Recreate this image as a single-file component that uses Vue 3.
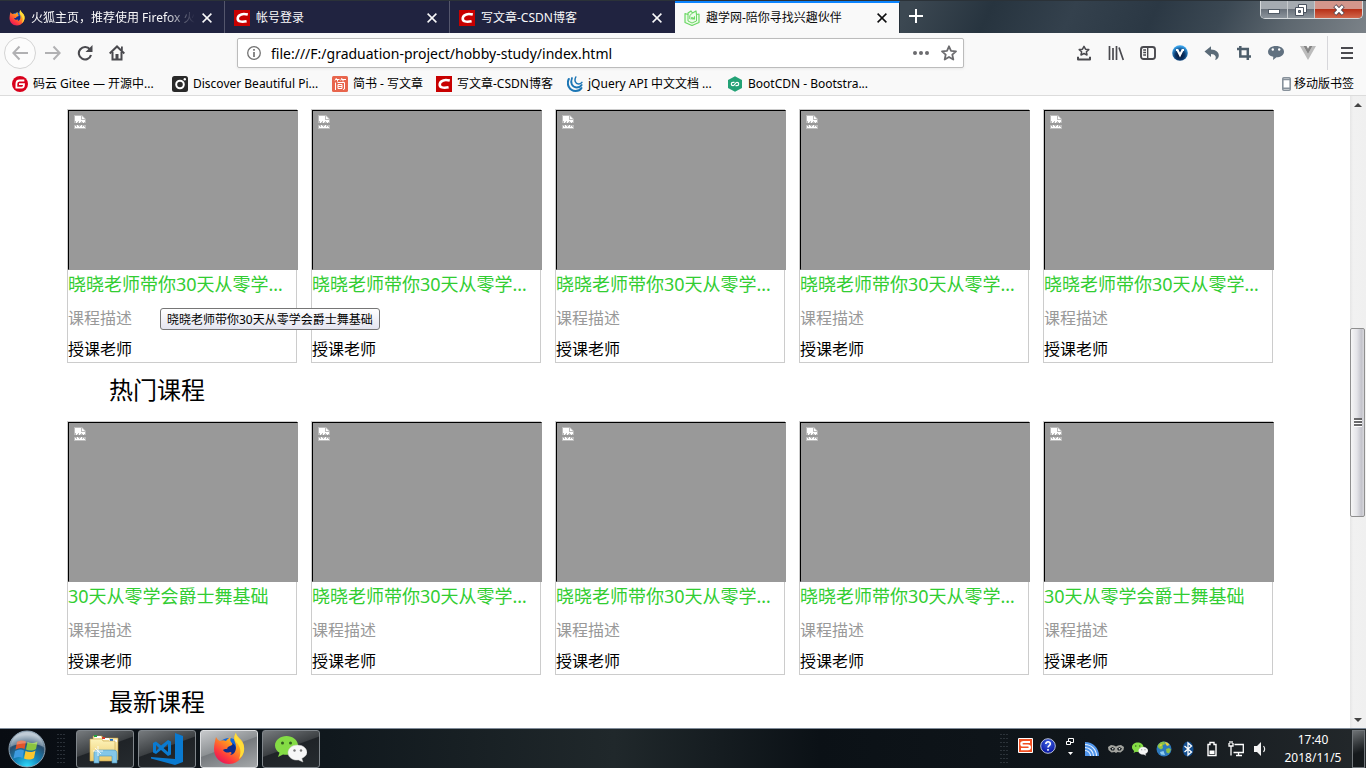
<script setup>
import { ref } from 'vue'

const address = ref('file:///F:/graduation-project/hobby-study/index.html')

const tabs = [
  { title: '火狐主页，推荐使用 Firefox 火狐浏览器', icon: 'firefox' },
  { title: '帐号登录', icon: 'csdn' },
  { title: '写文章-CSDN博客', icon: 'csdn' },
  { title: '趣学网-陪你寻找兴趣伙伴', icon: 'book', active: true },
]

const bookmarks = [
  { title: '码云 Gitee — 开源中...', icon: 'gitee', size: 'wide' },
  { title: 'Discover Beautiful Pi...', icon: 'camera', size: 'wide' },
  { title: '简书 - 写文章', icon: 'jianshu', size: 'short' },
  { title: '写文章-CSDN博客', icon: 'csdn', size: 'medium' },
  { title: 'jQuery API 中文文档 ...', icon: 'jquery', size: 'wide' },
  { title: 'BootCDN - Bootstra...', icon: 'bootcdn', size: 'wide' },
]

const tools = [
  { name: '书签', icon: 'bookmark-tray' },
  { name: '我的足迹', icon: 'library' },
  { name: '侧栏', icon: 'sidebar' },
  { name: 'V 扩展', icon: 'v-ball' },
  { name: '撤销', icon: 'undo' },
  { name: '截图', icon: 'crop' },
  { name: '聊天', icon: 'chat' },
  { name: 'Vue', icon: 'vue' },
]

const full = '晓晓老师带你30天从零学会爵士舞基础'
const brief = '30天从零学会爵士舞基础'
const sections = [
  { heading: '热门课程', courses: [full, full, full, full, full] },
  { heading: '最新课程', courses: [brief, full, full, full, brief] },
]

const apps = [
  { name: '资源管理器', icon: 'explorer' },
  { name: 'Visual Studio Code', icon: 'vscode' },
  { name: 'Firefox', icon: 'firefox', active: true },
  { name: '微信', icon: 'wechat' },
]

const tray = ['wifi', 'eyes', 'wechat', 'globe', 'bluetooth', 'battery', 'network', 'volume']
</script>

<template>
  <div class="desktop">
    <svg class="sprite" width="0" height="0" aria-hidden="true">
      <defs>
        <linearGradient id="g-fox" x1="0.9" y1="0" x2="0.2" y2="1">
          <stop offset="0" stop-color="#fff044" /><stop offset="0.4" stop-color="#ff9a1f" />
          <stop offset="0.75" stop-color="#ff3a3d" /><stop offset="1" stop-color="#e2105f" />
        </linearGradient>
        <radialGradient id="g-orb" cx="0.5" cy="1" r="0.9">
          <stop offset="0" stop-color="#2fe0ff" /><stop offset="0.4" stop-color="#1583b8" />
          <stop offset="0.75" stop-color="#284e6e" /><stop offset="1" stop-color="#a7b8c6" />
        </radialGradient>
        <radialGradient id="g-ball" cx="0.5" cy="0.65" r="0.6">
          <stop offset="0" stop-color="#05102e" /><stop offset="0.5" stop-color="#0a3568" />
          <stop offset="1" stop-color="#3aa5ee" />
        </radialGradient>
        <linearGradient id="g-folder" x1="0" y1="0" x2="0" y2="1">
          <stop offset="0" stop-color="#fdf3ba" /><stop offset="1" stop-color="#eccb6c" />
        </linearGradient>
        <radialGradient id="g-help" cx="0.5" cy="0.3" r="0.7">
          <stop offset="0" stop-color="#3f63e0" /><stop offset="1" stop-color="#0410a0" />
        </radialGradient>
      </defs>
      <symbol id="i-firefox" viewBox="0 0 32 32">
        <circle cx="16" cy="17" r="12" fill="#1168dd" />
        <path fill="#0c2c8c" d="M12 10c5-3 12 1 11 8-1 4-4 6-8 6s-7-3-7-7z" />
        <path fill="url(#g-fox)" d="M3 4c1 2 2 3 4 4 2-1 4-1 6 0 1-2 3-3 5-4-1 2-1 4 0 5 1 1 2 2 1 3-1 1-3 1-4 2-1 1 0 2-2 2-1 0-2 0-3 1 2 3 5 3 7 2 2 0 2 2 0 3 4 0 6-4 6-8 0-4-2-6-2-8 0-3 1-5 2-6 0 4 7 6 8 13C32 22 26 31 16 31 7 31 1 24 1 16 1 12 2 8 3 4z" />
        <path fill="#ffdd39" d="M23 0c0 5 7 7 8 14 1 5-2 10-5 12 3-8 1-13-3-17-2-3-2-6 0-9z" />
      </symbol>
      <symbol id="i-csdn" viewBox="0 0 16 16">
        <path fill="#c80000" d="M0 0h16v16H0z" />
        <path fill="none" stroke="#fff" stroke-width="2.6" d="M13.8 4.600C9 3.400 4.600 4.200 3.800 7.700c-.8 4 3.600 4.600 8.800 3.600" />
      </symbol>
      <symbol id="i-book" viewBox="0 0 16 16">
        <path fill="#ecfbe8" stroke="#6bd765" stroke-width="1.200" stroke-linejoin="round" d="M1 3.500 4 4.500V3l3-2 1.500 2L12 1l.5 3.500L15 4v8.500l-7 3-7-3z" />
        <path fill="none" stroke="#6bd765" d="M4 4.500V11l4 2 4.500-2V4.500M8.500 3 5.800 5.500V9M7 9.500l1-2.500 1 2.500 1.500-3v3" />
      </symbol>
      <symbol id="i-gitee" viewBox="0 0 16 16">
        <circle cx="8" cy="8" r="8" fill="#d9001b" />
        <path fill="none" stroke="#fff" stroke-width="1.800" d="M12.300 4.500H7.500C5 4.500 4.400 5.800 4.400 8v3.600h5.400c1.500 0 2.200-.8 2.200-3.400H7" />
      </symbol>
      <symbol id="i-camera" viewBox="0 0 16 16">
        <rect width="16" height="16" rx="2.500" fill="#292929" />
        <circle cx="8" cy="8.500" r="3.800" fill="none" stroke="#fff" stroke-width="2" />
        <circle cx="12.800" cy="3.300" r="1.200" fill="#fff" />
      </symbol>
      <symbol id="i-jianshu" viewBox="0 0 16 16">
        <rect width="16" height="16" rx="1.500" fill="#e8654d" />
        <path fill="none" stroke="#fff" d="M4.500 2 3 4.500M4 3.500h3.500M5.500 4v1.500M10 2 8.700 4.500M9.500 3.500H14M11 4v1.500M3.500 6.500V14M5.500 6.500h7V13L11 13.500M6 8.500h4v4H6zM6 10.500h4" />
      </symbol>
      <symbol id="i-jquery" viewBox="0 0 16 16">
        <g fill="none" stroke="#1c76b5" stroke-linecap="round">
          <path stroke-width="2" d="M1.800 3C-.8 8.500 2.500 15 8.500 15c3 0 5-1.200 6-3" />
          <path stroke-width="1.800" d="M5 2C3 6.800 5 11.300 9.500 11.500c2.500 0 4.200-1 5.200-2.500" />
          <path stroke-width="1.500" d="M8.800 1C7 4.500 8.500 8 11.500 8c1.500 0 2.700-.6 3.400-1.600" />
        </g>
      </symbol>
      <symbol id="i-bootcdn" viewBox="0 0 16 16">
        <path fill="#23a276" d="m8 .2 7 3.900v7.800l-7 3.900-7-3.900V4.100z" />
        <path fill="none" stroke="#fff" stroke-width="1.200" d="M7.500 6.300H6a1.700 1.700 0 0 0 0 3.400c1.800 0 2.200-3.400 4-3.400a1.700 1.700 0 0 1 0 3.400H8.500" />
      </symbol>
      <symbol id="i-phone" viewBox="0 0 9 14">
        <rect x=".8" y=".8" width="7.400" height="12.400" rx="1" fill="#fff" stroke="#87919b" stroke-width="1.600" />
        <path stroke="#87919b" stroke-width="1.400" d="M1 2.500h7M1 11.300h7" />
      </symbol>
      <symbol id="i-bookmark-tray" viewBox="0 0 16 16">
        <path fill="none" stroke="#4a4a4f" stroke-width="1.500" stroke-linejoin="round" d="m8 1.300 1.500 2.900 3.300.4-2.400 2.200.6 3.200-3-1.500L5 10l.6-3.200-2.400-2.200 3.300-.4z" />
        <path fill="none" stroke="#4a4a4f" stroke-width="2" stroke-linejoin="round" d="M2 11.800v2.600h12v-2.600" />
      </symbol>
      <symbol id="i-library" viewBox="0 0 16 16">
        <path fill="none" stroke="#4a4a4f" stroke-width="1.700" d="M1.500 1v14M5 3v12M8.500 1v14M11 2.500 15.300 15" />
      </symbol>
      <symbol id="i-sidebar" viewBox="0 0 16 16">
        <rect x="1" y="2" width="14" height="12" rx="2.500" fill="none" stroke="#4a4a4f" stroke-width="1.900" />
        <path stroke="#4a4a4f" stroke-width="1.400" d="M7.700 2v12M3.200 5H6M3.200 7.500H6M3.200 10H6" />
      </symbol>
      <symbol id="i-v-ball" viewBox="0 0 16 16">
        <circle cx="8" cy="8" r="7.800" fill="url(#g-ball)" />
        <path fill="none" stroke="#fff" stroke-width="2.200" d="M4 5h1.500L8 10l2.500-5H12" />
      </symbol>
      <symbol id="i-undo" viewBox="0 0 16 16">
        <path fill="#5b6b78" d="M.5 6.500 7 1.300v3.200c5 0 8.300 3 7.800 6.500-.2 1.800-1.500 3.500-3.800 4 1.800-3 .5-5.800-4-6v3z" />
      </symbol>
      <symbol id="i-crop" viewBox="0 0 16 16">
        <path fill="none" stroke="#4d5e6b" stroke-width="2.500" d="M4.300 1v10.500H15M1 4h10.800v11" />
      </symbol>
      <symbol id="i-chat" viewBox="0 0 16 16">
        <path fill="#617180" d="M8 1c4.500 0 8 2.300 8 5.700 0 3.300-3.500 5.600-7.500 5.600L5 15l.3-3.200C2.300 11.300 0 9.500 0 6.700 0 3.300 3.500 1 8 1z" />
        <circle cx="4.800" cy="4.500" r="1.200" fill="#fff" /><circle cx="11.200" cy="4.500" r="1.200" fill="#fff" />
      </symbol>
      <symbol id="i-vue" viewBox="0 0 16 16">
        <path fill="#bcbcbc" d="M0 1h3.500L8 9l4.500-8H16L8 15z" /><path fill="#858585" d="M3.500 1h3L8 3.800 9.500 1h3L8 9z" />
      </symbol>
      <symbol id="i-broken" viewBox="0 0 12 14">
        <path fill="#fff" fill-opacity=".35" d="M0 0h8l4 4v4H0zM0 10h12v4H0z" />
        <path fill="#fff" d="M1 1h6v4h4v2h-1v1H9V7H8V6H7v1H6v1H5V6H4v1H3v1H2V6H1zM8 1l3 3H8zM1 13v-2h1v1h1v-2h1v1h1v1h1v-1h1v-1h1v2h1v-1h1v1h1v1z" />
      </symbol>
      <symbol id="i-explorer" viewBox="0 0 32 32">
        <path fill="url(#g-folder)" stroke="#b98f35" stroke-width=".6" d="M4 3h9l1 2h15v22H4z" />
        <path fill="#fff" d="M6 3h6v2H6zM13 5h7v2h-7zM20 7h8v2h-8z" />
        <path fill="#21a342" d="M5 2h3v2H5z" /><path fill="#d53b28" d="M13 4h3v2h-3z" /><path fill="#1e6fd0" d="M21 6h3v2h-3z" />
        <path fill="url(#g-folder)" stroke="#c7a14b" stroke-width=".6" d="M1 6h12l1 2h12v20H1z" />
        <path fill="#84c7e8" stroke="#4c93bb" stroke-width=".6" d="M5 21c0-3 1-4 4-4h15c3 0 4 1 4 4v9h-5v-7H10v7H5z" />
        <path stroke="#fff" stroke-width=".8" d="M9 13v10M4 18h10M6 15l6 6" />
      </symbol>
      <symbol id="i-vscode" viewBox="0 0 32 32">
        <path fill="#0a7ad0" d="M24 0 32 3v26l-8 3L0 25.500V24l24 2zM17 7l3 1.500v13L17 23l-7-6-5 4-3-1.500V10l3-1.500 5 4zM5 12v6l3-3zm7.500 3 4.500 4v-8z" />
      </symbol>
      <symbol id="i-wechat" viewBox="0 0 32 32">
        <path fill="#84dc45" d="M11.500 3C5.500 3 0 7 0 12.500c0 3.200 2 5.700 4.500 7.300L3 24l5-2.500c7 1.500 15-2 15-9C23 7 17.500 3 11.500 3z" />
        <circle cx="7.500" cy="10" r="1.500" fill="#335f20" /><circle cx="15.500" cy="10" r="1.500" fill="#335f20" />
        <path fill="#f7f7f7" stroke="#c9c9c9" stroke-width=".5" d="M22.500 12c-5.500 0-9.500 3.500-9.500 7.800s4.500 8 10.500 7.200L28 29l-1.200-3.500C29.500 24 32 22 32 19.500c0-4-4-7.500-9.500-7.500z" />
        <circle cx="19.500" cy="17.500" r="1.200" fill="#777" /><circle cx="26" cy="17.500" r="1.200" fill="#777" />
      </symbol>
      <symbol id="i-wifi" viewBox="0 0 16 16">
        <path fill="#4f94ea" d="M1 1c8 0 14 6 14 14H1z" />
        <path stroke="#e4f0ff" fill="none" stroke-width="1.100" d="M1 3.500A11.500 11.500 0 0 1 12.500 15M1 6.500A8.500 8.500 0 0 1 9.500 15M1 9.500A5.500 5.500 0 0 1 6.500 15" />
      </symbol>
      <symbol id="i-eyes" viewBox="0 0 16 16">
        <path fill="#a3a49f" d="M0 6 3 4l3 .5 2 1 2-1L13 4l3 2-.5 3-3 2.500L9.500 11 8 12l-1.500-1-3 .5L.5 9z" />
        <path fill="#171d20" d="M2 7.500 4.500 6 7 7.500 6 9.500H3.500zM9 7.500 11.500 6 14 7.500l-1.500 2H10z" />
        <circle cx="4.800" cy="7.800" r=".8" fill="#eee" /><circle cx="11.500" cy="7.800" r=".8" fill="#eee" />
      </symbol>
      <symbol id="i-globe" viewBox="0 0 16 16">
        <circle cx="8" cy="8" r="7.500" fill="#2d79bd" />
        <path fill="#8fc342" d="M1.500 5c1.500-3 4-4.300 7-4.400L9 3 6.500 4.500 7 7 5 8.500 2.500 7zM10 8l3-1 2 1.500-2 4-2.500-1z" />
        <path fill="#e9cf3c" d="m9 .8 3 1.200 1.500 2-2.500 1L9.500 3zM4 3.500 6 3l-.5 2-2 .5z" /><path fill="#8fcdf0" d="m4 11 3.500-1 1.500 4-4-.5z" />
      </symbol>
      <symbol id="i-bluetooth" viewBox="0 0 16 16">
        <ellipse cx="8" cy="8" rx="5.500" ry="7.500" fill="#124d8e" />
        <path fill="none" stroke="#fff" stroke-width="1.300" d="m4.500 5 7 6L8 14V2l3.500 3-7 6" />
      </symbol>
      <symbol id="i-battery" viewBox="0 0 16 16">
        <path fill="none" stroke="#fff" stroke-width="1.400" d="M4 3.500h2v-2h4v2h2v11H4z" /><path fill="#fff" d="M5.500 9.500h5v3.500h-5z" />
      </symbol>
      <symbol id="i-network" viewBox="0 0 16 16">
        <path fill="none" stroke="#fff" stroke-width="1.300" d="M6.500 3.500h8.800v8H5.500M8 14.500h6M10.500 12v2M1 2v3h4V2M3 5v9.500M2 0v2.500M4 0v2.500" />
      </symbol>
      <symbol id="i-volume" viewBox="0 0 16 16">
        <path fill="#f4f4f4" d="M2 5h3l4-4v14l-4-4H2z" /><path fill="none" stroke="#eee" stroke-width="1.200" d="M11.500 5c1.500 2 1.500 4 0 6" />
      </symbol>
    </svg>

    <header class="titlebar">
      <nav class="tabs" aria-label="标签页">
        <div v-for="(tab, i) in tabs" :key="i" class="tab" :class="{ active: tab.active }">
          <svg class="favicon"><use :href="'#i-' + tab.icon" /></svg>
          <span class="tab-title">{{ tab.title }}</span>
          <button class="close" aria-label="关闭标签页">
            <svg width="10" height="10" viewBox="0 0 10 10"><path d="m.6.6 8.800 8.800m0-8.800L.6 9.400" fill="none" stroke="currentColor" stroke-width="1.500" /></svg>
          </button>
        </div>
      </nav>
      <button class="new-tab" aria-label="新建标签页">
        <svg width="14" height="14" viewBox="0 0 14 14"><path d="M7 0v14M0 7h14" stroke="#fff" stroke-width="2" /></svg>
      </button>
      <div class="window-controls">
        <button class="win" aria-label="最小化">
          <svg width="12" height="12" viewBox="0 0 12 12"><rect x=".5" y="5.500" width="11" height="4" fill="#fff" stroke="#515b66" /></svg>
        </button>
        <button class="win" aria-label="还原">
          <svg width="12" height="12" viewBox="0 0 12 12"><path fill="#fff" stroke="#4a5360" d="M3.500.5h8v8h-8z" /><path fill="#fff" stroke="#4a5360" d="M.5 3.500h8v8h-8z" /><path fill="#7d8692" stroke="#4a5360" d="M3.500 6.500h2v2h-2z" /></svg>
        </button>
        <button class="win quit" aria-label="关闭">
          <svg width="12" height="12" viewBox="0 0 12 12"><path d="m1.800 1.800 8.400 8.400m0-8.400-8.400 8.400" stroke="#4f4650" stroke-width="4.200" /><path d="m2.200 2.200 7.600 7.600m0-7.600L2.200 9.800" stroke="#fff" stroke-width="2.600" /></svg>
        </button>
      </div>
    </header>

    <div class="navbar">
      <button class="tool back" aria-label="后退">
        <svg width="16" height="16" viewBox="0 0 16 16"><path d="M16 8H1.500M7.500 1.500 1.300 8l6.200 6.500" fill="none" stroke="#b1b1b3" stroke-width="2" /></svg>
      </button>
      <button class="tool" aria-label="前进">
        <svg width="16" height="16" viewBox="0 0 16 16"><path d="M0 8h14.500M8.500 1.500 14.700 8l-6.200 6.500" fill="none" stroke="#b1b1b3" stroke-width="2" /></svg>
      </button>
      <button class="tool" aria-label="刷新">
        <svg width="16" height="16" viewBox="0 0 16 16"><path d="M13 4.500A6.200 6.200 0 1 0 14 10" fill="none" stroke="#4a4a4f" stroke-width="2.100" /><path fill="#4a4a4f" d="M15.500 0v7H8.500z" /></svg>
      </button>
      <button class="tool" aria-label="主页">
        <svg width="16" height="16" viewBox="0 0 16 16"><path d="M.7 8.500 8 1.500l7.300 7" fill="none" stroke="#4a4a4f" stroke-width="2" /><path d="M3.500 7v7.500h9V7" fill="none" stroke="#4a4a4f" stroke-width="2" /><path fill="#4a4a4f" d="M6.500 9h3v6h-3zM12 1.500h1.800v4H12z" /></svg>
      </button>
      <div class="urlbar">
        <svg class="info" width="14" height="14" viewBox="0 0 14 14"><circle cx="7" cy="7" r="6.300" fill="none" stroke="#737373" stroke-width="1.300" /><path d="M7 6v5M7 3v1.700" stroke="#737373" stroke-width="1.700" /></svg>
        <input v-model="address" class="address" type="text" aria-label="地址" spellcheck="false" />
        <button class="url-action" aria-label="更多操作">
          <svg width="16" height="16" viewBox="0 0 16 16"><g fill="#6b6b6e"><circle cx="2" cy="8" r="2" /><circle cx="8" cy="8" r="2" /><circle cx="14" cy="8" r="2" /></g></svg>
        </button>
        <button class="url-action" aria-label="加入书签">
          <svg width="16" height="16" viewBox="0 0 16 16"><path d="m8 1.300 2 4.500 5 .5-3.700 3.300 1 4.900L8 12l-4.300 2.500 1-4.900L1 6.300l5-.5z" fill="none" stroke="#6b6b6e" stroke-width="1.800" stroke-linejoin="round" /></svg>
        </button>
      </div>
      <button v-for="tool in tools" :key="tool.icon" class="tool" :aria-label="tool.name">
        <svg width="16" height="16"><use :href="'#i-' + tool.icon" /></svg>
      </button>
      <span class="divider"></span>
      <button class="tool" aria-label="菜单">
        <svg width="12" height="12" viewBox="0 0 12 12"><path d="M0 1h12M0 6h12M0 11h12" stroke="#4a4a4f" stroke-width="2" /></svg>
      </button>
    </div>

    <nav class="bookmarks" aria-label="书签">
      <a v-for="mark in bookmarks" :key="mark.title" href="#" class="bookmark" :class="mark.size">
        <svg width="16" height="16"><use :href="'#i-' + mark.icon" /></svg>{{ mark.title }}
      </a>
      <a href="#" class="bookmark mobile"><svg width="9" height="14"><use href="#i-phone" /></svg>移动版书签</a>
    </nav>

    <div class="viewport">
      <main class="page">
        <section v-for="(section, s) in sections" :key="s">
          <div class="courses">
            <article v-for="(name, c) in section.courses" :key="c" class="course">
              <div class="cover" role="img" :aria-label="name"><svg width="12" height="14"><use href="#i-broken" /></svg></div>
              <a href="#" class="course-name">{{ name }}</a>
              <p class="course-about">课程描述</p>
              <p class="course-teacher">授课老师</p>
              <span v-if="s === 0 && c === 0" class="tooltip" role="tooltip">{{ name }}</span>
            </article>
          </div>
          <h2 class="heading">{{ section.heading }}</h2>
        </section>
      </main>
      <div class="scrollbar">
        <button class="arrow" aria-label="向上滚动"><svg width="8" height="4" viewBox="0 0 8 4"><path fill="#444" d="m4 0 4 4H0z" /></svg></button>
        <span class="thumb"><svg width="8" height="9" viewBox="0 0 8 9"><path stroke="#444" stroke-width="1.400" d="M0 1h8M0 4h8M0 7h8" /><path stroke="#fff" d="M0 2.500h8M0 5.500h8M0 8.500h8" /></svg></span>
        <button class="arrow" aria-label="向下滚动"><svg width="8" height="4" viewBox="0 0 8 4"><path fill="#444" d="M0 0h8L4 4z" /></svg></button>
      </div>
    </div>

    <footer class="taskbar">
      <button class="start" aria-label="开始">
        <svg width="38" height="38" viewBox="0 0 38 38">
          <circle cx="19" cy="19" r="18" fill="url(#g-orb)" stroke="#8fa3b3" />
          <path fill="#e2552a" d="M9 12c3-2 6-2 9-.5L16.500 19c-3-1.500-6-1-9 .5z" />
          <path fill="#8bc53f" d="M19.500 12c3 1.500 6 1.500 10-.5L28 19c-3 2-7 2-10 .5z" />
          <path fill="#3d9be0" d="M7 21c3-1.500 6-2 9-.5L14.500 28c-3-1.500-6-1-9 .5z" />
          <path fill="#fcc62d" d="M17.500 21c3 1.500 7 1.500 10-.5L26 28c-3 2-7 2-10 .5z" />
          <path fill="#fff" opacity=".28" d="M2 17C4 7 11 2 19 2s15 5 17 15C25 12 13 12 2 17z" />
        </svg>
      </button>
      <svg class="grip" width="9" height="31"><path v-for="x in [1, 4, 7]" :key="x" :d="`M${x} 1v30`" stroke="#4b525a" stroke-dasharray="1 3" /></svg>
      <button v-for="app in apps" :key="app.name" class="app" :class="{ current: app.active }" :aria-label="app.name">
        <svg width="32" height="32"><use :href="'#i-' + app.icon" /></svg>
      </button>
      <div class="tray">
        <svg width="9" height="31"><path v-for="x in [1, 4, 7]" :key="x" :d="`M${x} 1v30`" stroke="#4b525a" stroke-dasharray="1 3" /></svg>
        <svg class="sogou" width="15" height="15" viewBox="0 0 15 15"><path fill="#f25022" stroke="#fff" d="M.5.5h14v14H.5z" /><path fill="none" stroke="#fff" stroke-width="2.200" d="M12 4H5.500C2.500 4 3 7.500 5 7.500h5c2.500 0 2.500 3.700 0 3.700H3" /></svg>
        <svg class="help" width="16" height="16" viewBox="0 0 16 16"><circle cx="8" cy="8" r="7.300" fill="url(#g-help)" stroke="#b9c2d8" /><path fill="none" stroke="#fff" stroke-width="1.600" d="M5.800 6C5.800 3 10.500 3.200 10.300 6 10.200 7.700 8 7.500 8 9.500M8 11v1.700" /></svg>
        <svg class="restore" width="8" height="18" viewBox="0 0 8 18"><path fill="none" stroke="#fff" d="M2.500 3V.5h5v4H5M.5 3.500h4v3h-4z" /><path fill="#fff" d="M2 14h5l-2.500 3z" /></svg>
        <span v-for="item in tray" :key="item" class="tray-item"><svg width="16" height="16"><use :href="'#i-' + item" /></svg></span>
      </div>
      <time class="clock"><span>17:40</span><span>2018/11/5</span></time>
      <button class="show-desktop" aria-label="显示桌面"></button>
    </footer>
  </div>
</template>

<style>
body { background: #fff; overflow: hidden; }
</style>

<style scoped>
.desktop {
  display: flex;
  flex-direction: column;
  height: 100vh;
  color: #000;
  font-family: "Noto Sans", "Noto Sans CJK SC", sans-serif;
  font-size: 12px;
}
.desktop * { box-sizing: border-box; }
.sprite { position: absolute; }
svg { display: block; flex: none; }
button {
  display: flex;
  align-items: center;
  justify-content: center;
  padding: 0;
  border: 0;
  background: none;
  font: inherit;
}
a { color: inherit; text-decoration: none; }

.titlebar {
  display: flex;
  flex: none;
  height: 33px;
  border-top: 1px solid #2b3238;
  background: linear-gradient(115deg, #3c4852 66%, #27343f 72%, #34414d 78%, #2b3844 84%, #3b4853 89%, #5d676f 94%, #7b8288 100%);
}
.tabs { display: flex; flex: 0 1 900px; min-width: 0; }
.tab {
  display: flex;
  flex: 1;
  align-items: center;
  gap: 6px;
  min-width: 0;
  padding: 2px 5px 0 9px;
  border-right: 1px solid #54566c;
  background: #202340;
  color: #f9f9fa;
}
.tab:nth-child(3) { border-right-color: #202340; }
.tab.active {
  padding-top: 0;
  border-top: 2px solid #0a84ff;
  border-right-color: #27313a;
  background: #f9f9f9;
  color: #0c0c0d;
}
.favicon { width: 16px; height: 16px; }
.tab-title {
  flex: 1;
  overflow: hidden;
  line-height: 20px;
  white-space: nowrap;
}
.tab:first-child .tab-title { mask-image: linear-gradient(to left, transparent, #000 30px); }
.close { width: 24px; height: 24px; margin-left: -6px; color: inherit; }
.new-tab { width: 32px; height: 30px; }
.window-controls {
  display: flex;
  height: 18px;
  margin-right: 3px;
  margin-left: auto;
  border: 1px solid #d5d9dc;
  border-top: 0;
  border-radius: 0 0 5px 5px;
  overflow: hidden;
}
.win {
  width: 27px;
  border-right: 1px solid #c6cacd;
  background: linear-gradient(#a5abb1 0 45%, #666e78 46%, #8c949c);
}
.quit {
  width: 47px;
  border-right: 0;
  background: linear-gradient(#d3968b 0 45%, #b52d15 46%, #d2674c);
}

.navbar {
  display: flex;
  flex: none;
  align-items: center;
  height: 40px;
  padding: 0 3px 0 4px;
  background: #f9f9f9;
}
.tool { flex: none; width: 32px; height: 32px; }
.back { margin-right: 1px; border: 1px solid #d4d4d4; border-radius: 50%; background: #fcfcfc; }
.urlbar {
  display: flex;
  flex: 1;
  align-items: center;
  min-width: 0;
  height: 30px;
  margin: 0 104px;
  padding: 0 0 0 9px;
  border: 1px solid #bcbcbc;
  border-radius: 2px;
  background: #fff;
  box-shadow: 0 1px 3px rgba(0, 0, 0, 0.07);
}
.address {
  flex: 1;
  min-width: 0;
  height: 26px;
  margin-left: 10px;
  padding: 0;
  border: 0;
  outline: 0;
  background: none;
  font: 14px "Noto Sans", sans-serif;
}
.url-action { width: 28px; height: 28px; }
.divider { width: 1px; height: 34px; margin: 0 3px; background: #d7d7db; }

.bookmarks {
  display: flex;
  flex: none;
  align-items: center;
  height: 23px;
  padding: 0 12px;
  border-bottom: 1px solid #dcdcdc;
  background: #f9f9f9;
}
.bookmark { display: flex; flex: none; align-items: center; gap: 5px; line-height: 20px; white-space: nowrap; }
.wide { width: 160px; }
.medium { width: 131px; }
.short { width: 104px; }
.mobile { gap: 3px; margin-left: auto; }

.viewport { display: flex; flex: 1; min-height: 0; background: #fff; }
.page { flex: 1; min-width: 0; padding: 13px 77px 0 67px; overflow: hidden; }
.courses { display: grid; grid-template-columns: repeat(5, minmax(0, 1fr)); gap: 14px; }
.course { position: relative; border: 1px solid #ccc; }
.cover {
  width: calc(100% + 2px);
  height: 160px;
  padding: 4px 5px;
  border: 1px solid #999;
  border-top-color: #000;
  border-left-color: #000;
  background: #999;
}
.course-name {
  display: block;
  overflow: hidden;
  margin-bottom: 2px;
  color: #32cd32;
  font-size: 18px;
  line-height: 28px;
  text-overflow: ellipsis;
  white-space: nowrap;
}
.course-about, .course-teacher { margin: 0; font-size: 16px; }
.course-about { color: #999; line-height: 36px; }
.course-teacher { line-height: 26px; }
.tooltip {
  position: absolute;
  z-index: 1;
  top: 198px;
  left: 92px;
  padding: 2px 6px 0;
  border: 1px solid #767676;
  border-radius: 3px;
  background: linear-gradient(#fff, #e4e5f0);
  line-height: 18px;
  white-space: nowrap;
}
.heading { margin: 0; padding: 0 0 4px 42px; font-size: 24px; font-weight: 400; line-height: 54px; }

.scrollbar {
  display: flex;
  flex: none;
  flex-direction: column;
  justify-content: space-between;
  width: 16px;
  background: linear-gradient(to right, #e6e6e6, #f1f1f1 20%, #f0f0f0);
}
.arrow { width: 16px; height: 17px; }
.thumb {
  display: flex;
  align-items: center;
  justify-content: center;
  width: 15px;
  height: 189px;
  margin-top: 20px;
  border: 1px solid #8f8f8f;
  border-radius: 2px;
  background: linear-gradient(to right, #f6f6f6, #e4e4e8 45%, #c4c4cc 80%, #d8d8dc);
}

.taskbar {
  display: flex;
  flex: none;
  align-items: center;
  height: 40px;
  border-top: 1px solid #7f8b99;
  background: linear-gradient(to right, #080c12, #10181d 24%, #20282b 45%, #0b1116 60%, #10161b 80%, #23282b 100%);
}
.start { width: 38px; height: 39px; margin-left: 8px; }
.grip { margin: 0 10px 0 11px; }
.app {
  width: 58px;
  height: 38px;
  margin-right: 4px;
  border: 1px solid #80868b;
  border-radius: 3px;
  background: linear-gradient(160deg, #777b7e, #3c4043 45%, #1f2327 47%, #262b2f);
}
.current { border-color: #dcdee0; background: linear-gradient(160deg, #c8cacc, #8d9194 45%, #75797d 47%, #a5a8aa); }
.tray { display: flex; align-items: center; height: 38px; margin-left: auto; }
.sogou { margin: 0 7px 6px 9px; }
.help { margin: 0 10px 6px 0; }
.restore { margin: 0 6px 4px 0; }
.tray-item { display: flex; justify-content: center; width: 24px; }
.clock {
  display: flex;
  flex-direction: column;
  align-items: center;
  width: 80px;
  padding-left: 2px;
  color: #fff;
  line-height: 18px;
}
.show-desktop {
  width: 13px;
  height: 38px;
  margin-right: 1px;
  border: 1px solid #72777b;
  background: linear-gradient(160deg, #6d7174, #303437 40%, #15191c 60%);
}
</style>
